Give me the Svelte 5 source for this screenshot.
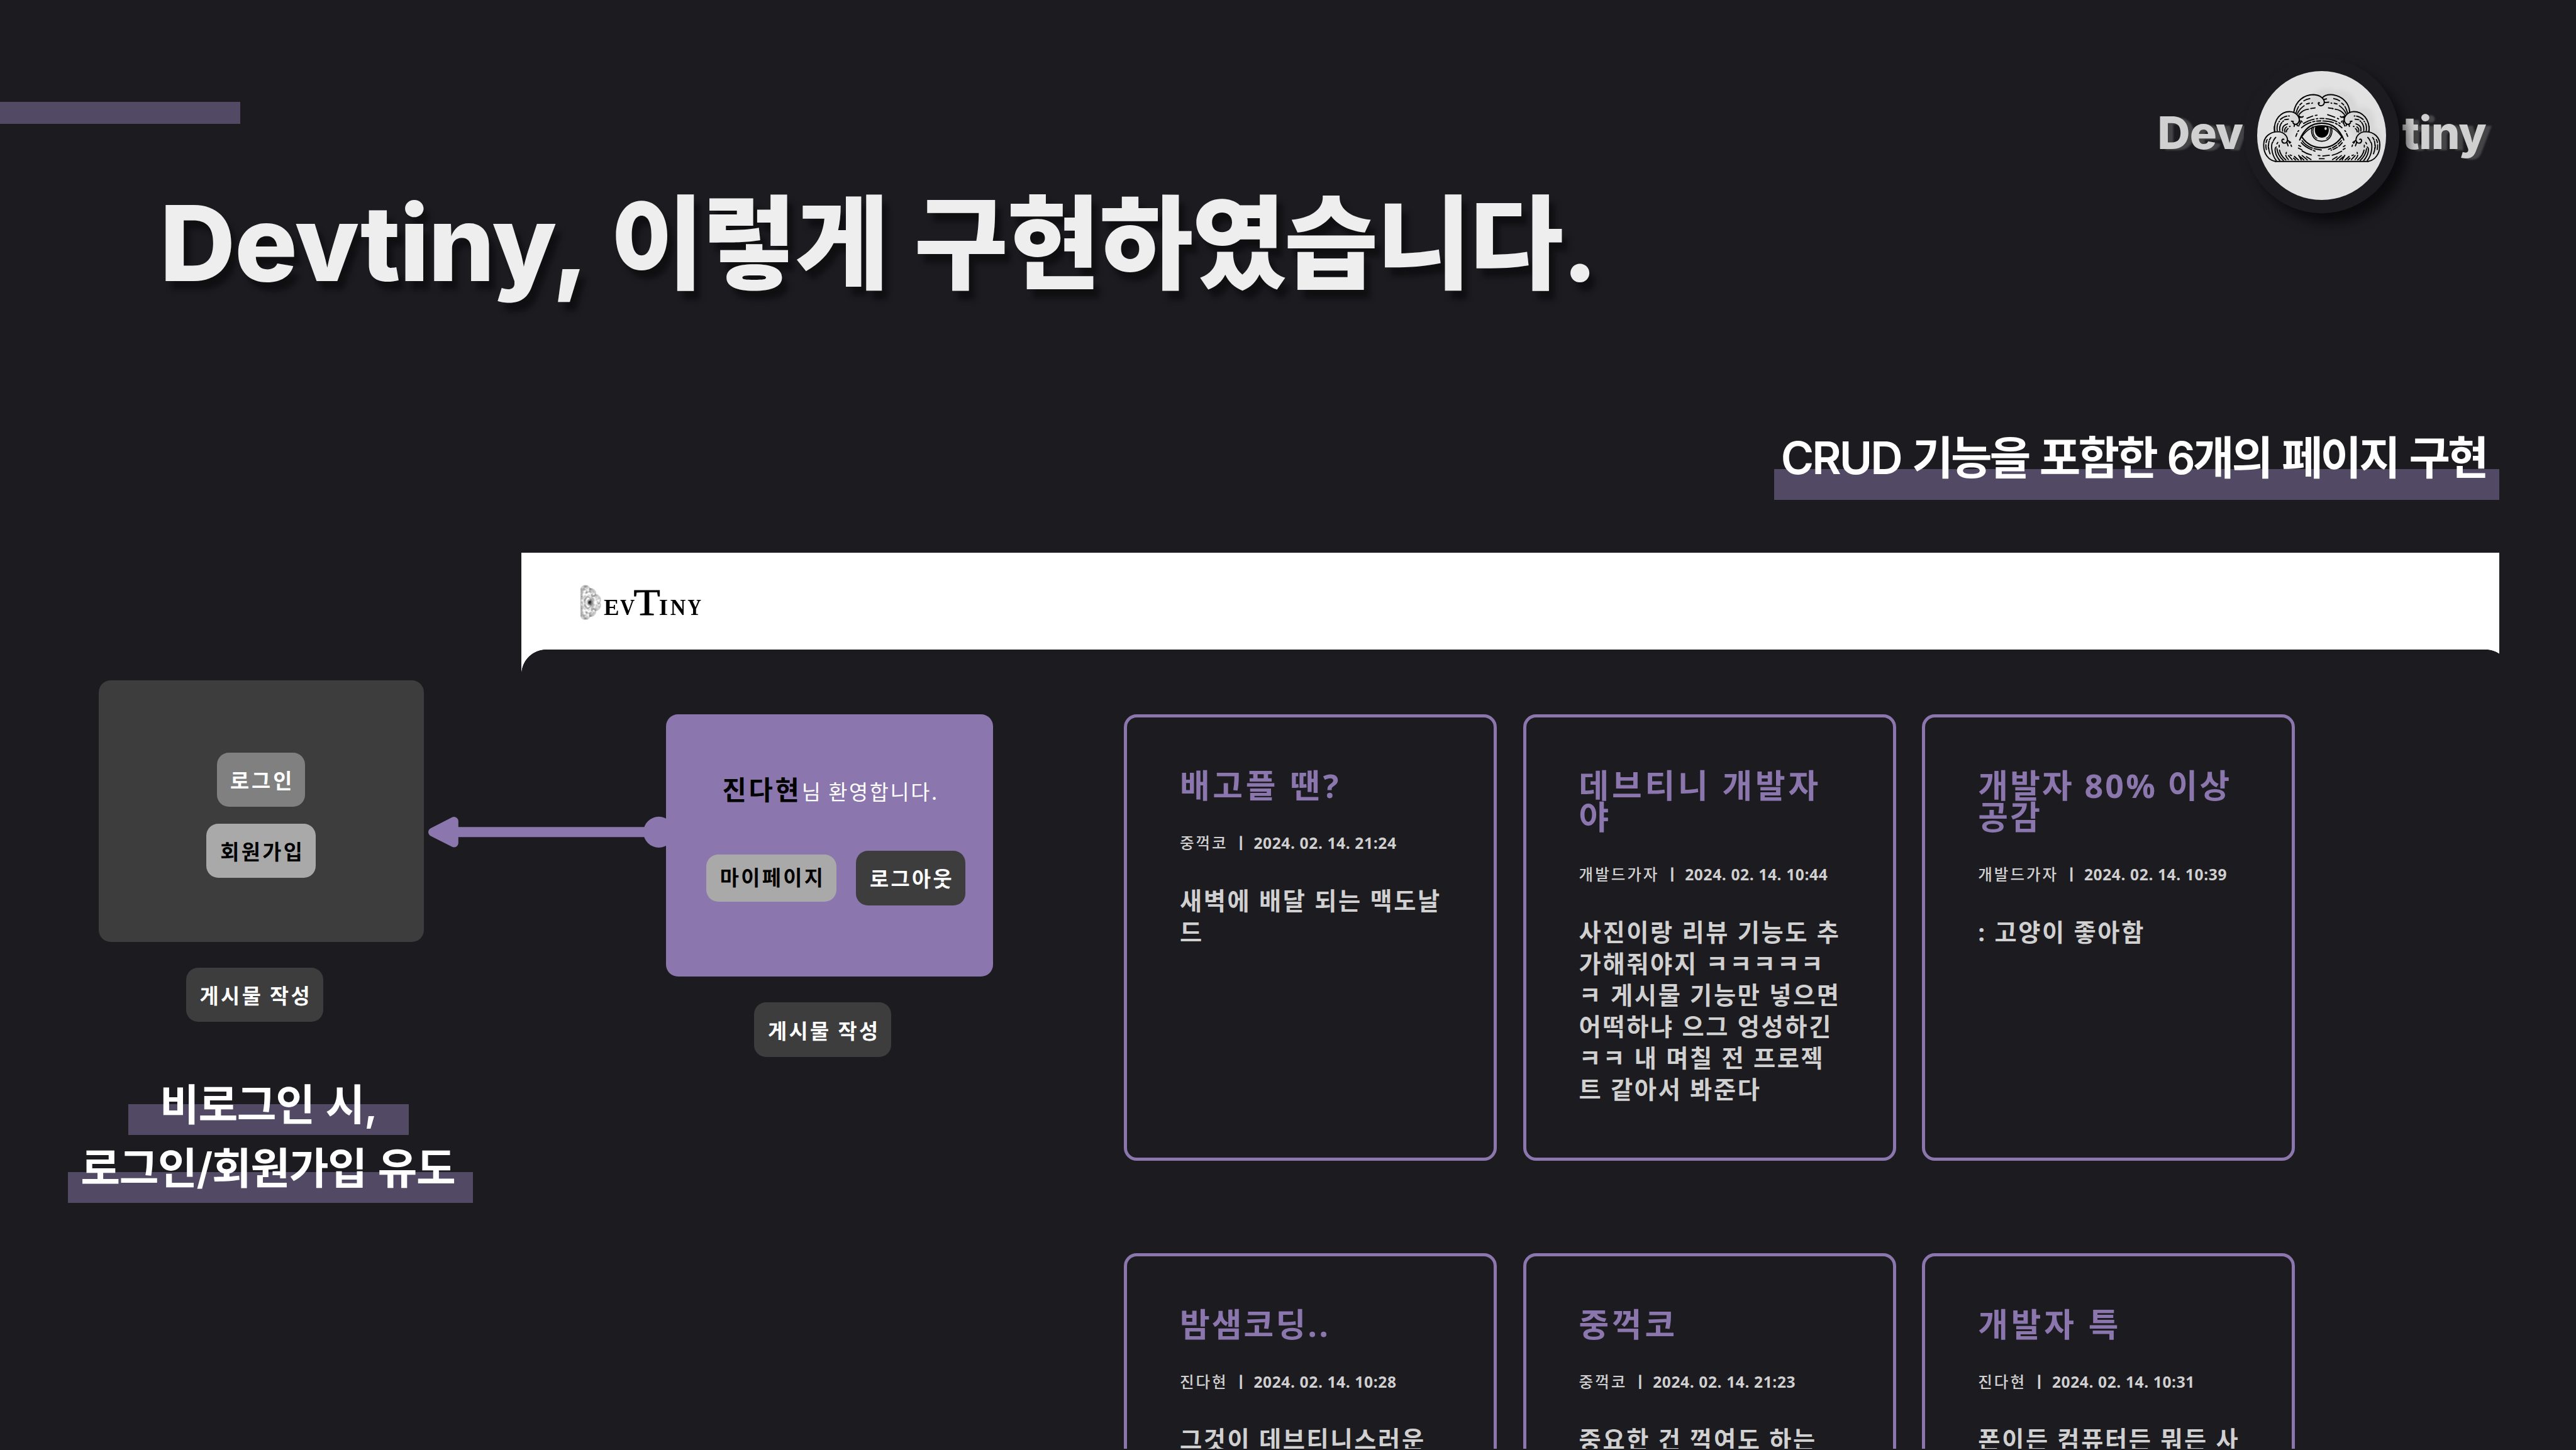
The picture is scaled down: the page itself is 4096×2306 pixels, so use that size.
<script>
  const posts = [
    { title: ['배고플 땐?'], author: '중꺽코', date: '2024. 02. 14. 21:24', body: ['새벽에 배달 되는 맥도날', '드'] },
    {
      title: ['데브티니 개발자', '야'],
      author: '개발드가자',
      date: '2024. 02. 14. 10:44',
      body: [
        '사진이랑 리뷰 기능도 추',
        '가해줘야지 ㅋㅋㅋㅋㅋ',
        'ㅋ 게시물 기능만 넣으면',
        '어떡하냐 으그 엉성하긴',
        'ㅋㅋ 내 며칠 전 프로젝',
        '트 같아서 봐준다'
      ]
    },
    { title: ['개발자 80% 이상', '공감'], tight: true, author: '개발드가자', date: '2024. 02. 14. 10:39', body: [': 고양이 좋아함'] },
    { title: ['밤샘코딩..'], tight: true, author: '진다현', date: '2024. 02. 14. 10:28', body: ['그것이 데브티니스러운'] },
    { title: ['중꺽코'], author: '중꺽코', date: '2024. 02. 14. 21:23', body: ['중요한 건 꺽여도 하는'] },
    { title: ['개발자 특'], author: '진다현', date: '2024. 02. 14. 10:31', body: ['폰이든 컴퓨터든 뭐든 사'] }
  ];
</script>

<!-- One half of the cloud; the other half is its mirror image -->
{#snippet half()}
  <g stroke-width="8.5">
    <path d="M150 645C98 636 68 588 68 535C64 476 110 438 166 437C206 438 234 466 234 497C232 522 200 524 195 502C194 491 202 487 208 491" />
    <path d="M143 437C136 350 190 297 248 297C296 298 319 334 316 360C310 388 283 394 272 374M262 364L274 366M283 388L280 400M300 386L303 396" />
    <path d="M143 400C141 415 142 425 145 437M316 352L325 376M234 497L256 512M228 508L238 536M313 326C324 337 336 338 343 331M316 340L330 334" />
  </g>
  <g stroke-width="8">
    <path d="M86 562C80 535 82 510 92 492" stroke-dasharray="34 14" />
    <path d="M112 592C96 555 98 500 118 478" stroke-dasharray="46 14 30 9" />
    <path d="M100 530C99 540 100 550 102 556" />
    <path d="M155 638C118 592 118 520 133 508M136 500C140 490 146 482 152 477" />
    <path d="M180 638C146 600 140 550 156 544M160 522L166 512" />
    <path d="M205 638C182 618 164 590 160 556M176 544L176 532" />
    <path d="M222 634C200 616 182 590 178 566M240 632C228 618 222 606 222 602M224 590L226 582" />
    <path d="M266 632L240 604M290 634L276 622M252 600L262 604" />
    <path d="M310 634C298 626 288 616 282 610M330 634L312 602M348 634L322 612M372 634L336 604M398 632L366 612" />
    <path d="M162 430C158 400 164 380 178 364M184 352C204 334 228 326 246 328" stroke-dasharray="52 12 20 12" />
    <path d="M180 430C176 400 188 376 206 362M214 354L240 350" stroke-dasharray="60 9" />
    <path d="M200 434C196 412 204 396 222 388M216 440C212 424 218 410 228 404M226 386L234 383M248 402L252 400M226 438C226 428 232 420 238 416" />
    <path d="M262 540L258 530M250 518L244 510M292 470L300 450M306 436L312 430" />
    <path d="M294 304C304 268 316 250 334 238M348 222C362 212 378 206 404 205" stroke-dasharray="46 14 34 16 10" />
    <path d="M304 310C314 286 330 270 350 256M366 244L386 239M403 239L408 237" />
    <path d="M314 318C334 292 360 282 380 280M396 276L426 271" />
    <path d="M322 376L312 398M330 362L336 370" />
  </g>
{/snippet}

{#snippet cloud()}
  <g fill="none" stroke="#000" stroke-linecap="round" stroke-linejoin="round">
    {@render half()}
    <g transform="translate(946 0) scale(-1 1)">{@render half()}</g>
    <g stroke-width="8.5">
      <path d="M278 300C290 222 350 180 415 179C466 181 492 210 491 234C486 262 449 264 449 238C450 234 454 234 457 237" />
      <path d="M478 200C495 182 525 177 552 180C622 192 664 240 668 300M490 212L506 208M494 234L522 231" />
      <path d="M150 645H796" stroke-width="9" />
      <path d="M319 495C352 412 410 378 473 378C536 378 594 412 627 495" stroke-width="9.5" />
      <path d="M336 470C375 415 420 395 473 395C526 395 571 415 610 470" stroke-width="7" />
      <path d="M334 474C372 528 418 549 473 549C528 549 574 528 612 474" stroke-width="9.5" />
      <path d="M408 404C394 436 404 502 473 504C542 502 552 436 538 404" stroke-width="7.5" />
      <path d="M418 402C406 432 412 470 440 484M528 402C540 432 534 470 506 484" stroke-width="6" />
    </g>
    <g stroke-width="8">
      <path d="M336 500C362 538 410 560 470 565M330 514C350 538 372 552 426 573" stroke-dasharray="90 12" />
      <path d="M610 500C584 532 556 548 520 560M616 514C596 540 572 556 538 566" stroke-dasharray="34 12" />
      <path d="M312 534L326 540M310 552L334 564M336 572C358 586 378 594 400 600M448 604L460 605M480 607L526 602M546 602C572 596 592 586 612 574M622 562L636 554M624 542L636 534M456 626L490 626" />
      <path d="M332 410C372 372 420 362 473 362C526 362 574 372 614 410" stroke-dasharray="76 14 14 12 30 14" />
      <path d="M346 380C382 356 424 345 473 345C522 345 564 356 600 380" stroke-dasharray="80 16 10 16 26 14" />
      <path d="M370 344L410 328M428 324L440 322M514 319L564 336M582 344L590 348M548 275L552 277" />
    </g>
    <path d="M430 397C414 440 436 479 473 479C512 479 532 440 518 397Z" fill="#000" stroke="none" />
    <ellipse cx="500" cy="416" rx="8" ry="10" fill="#d8d8d8" stroke="none" />
  </g>
{/snippet}

{#snippet post(p)}
  <article class="post">
    <h2 class:tight={p.tight}>{#each p.title as line}<span>{line}</span>{/each}</h2>
    <div class="meta"><span class="author">{p.author}</span><span class="sep">ㅣ</span><time>{p.date}</time></div>
    <p>{#each p.body as line}<span>{line}</span>{/each}</p>
  </article>
{/snippet}

<div class="slide">
  <header class="top">
    <div class="accent"></div>
    <div class="brand">
      <span class="word">Dev</span>
      <div class="emblem">
        <svg viewBox="22 14 902 902">
          <defs>
            <filter id="soft" x="-20%" y="-20%" width="140%" height="140%"><feGaussianBlur stdDeviation="17" /></filter>
          </defs>
          <path class="haze" d="M190 600C150 480 200 420 240 400C230 330 290 270 370 270C400 130 520 120 560 150C650 130 720 200 720 270C800 240 860 310 840 400C900 440 900 540 850 600Z" filter="url(#soft)" />
          <path class="clear" d="M250 590C200 500 300 420 330 330C380 220 560 210 610 330C660 420 760 500 690 590Z" filter="url(#soft)" />
          {@render cloud()}
        </svg>
      </div>
      <span class="word">tiny</span>
    </div>
  </header>

  <h1>Devtiny, <span class="hangul">이렇게 구현하였습니다.</span></h1>
  <p class="subtitle"><span class="latin">CRUD</span> 기능을 포함한 6개의 페이지 구현</p>

  <main>
    <aside>
      <section class="guest">
        <button class="login">로그인</button>
        <button class="join">회원가입</button>
      </section>
      <button class="write">게시물 작성</button>
      <div class="caption">
        <p class="first">비로그인 시,</p>
        <p class="second">로그인/회원가입 유도</p>
      </div>
    </aside>

    <section class="app">
      <div class="bar">
        <svg class="logo" viewBox="1340 1350 310 110">
          <g class="mini" transform="translate(1415.5 1356.9) rotate(90) scale(.0973)">{@render cloud()}</g>
          <g class="letters">
            <text x="1406" y="1432" textLength="36" lengthAdjust="spacingAndGlyphs">E</text>
            <text x="1444" y="1432" textLength="34" lengthAdjust="spacingAndGlyphs">V</text>
            <text class="tall" x="1475.5" y="1432" textLength="62" lengthAdjust="spacingAndGlyphs">T</text>
            <text x="1534.5" y="1432" textLength="21" lengthAdjust="spacingAndGlyphs">I</text>
            <text x="1561" y="1432" textLength="36" lengthAdjust="spacingAndGlyphs">N</text>
            <text x="1601" y="1432" textLength="32" lengthAdjust="spacingAndGlyphs">Y</text>
          </g>
        </svg>
      </div>
      <div class="content">
        <div class="side">
          <section class="member">
            <div class="hello"><strong>진다현</strong><span>님 환영합니다.</span></div>
            <div class="actions">
              <button class="mypage">마이페이지</button>
              <button class="logout">로그아웃</button>
            </div>
          </section>
          <button class="write">게시물 작성</button>
        </div>
        <div class="grid">
          {#each posts as p}{@render post(p)}{/each}
        </div>
      </div>
    </section>

    <svg class="arrow" viewBox="998 1900 580 78">
      <path d="M1060 1938.6H1535" stroke="#8b77ad" stroke-width="23.5" />
      <circle cx="1535" cy="1938.6" r="36" fill="#8b77ad" />
      <path d="M1008 1938.6L1058 1913V1964Z" fill="#8b77ad" stroke="#8b77ad" stroke-width="20" stroke-linejoin="round" />
    </svg>
  </main>
</div>

<style>
  /* 1rem is a hundred units of the 6000 x 3378 slide */
  :global(html) {
    font-size: 68.2667px;
  }
  :global(body) {
    margin: 0;
    background: #1c1b20;
    overflow: hidden;
  }
  * {
    box-sizing: border-box;
  }
  h1, h2, p {
    margin: 0;
  }
  .slide {
    width: 60rem;
    height: 33.78rem;
    overflow: hidden;
    background: #1c1b20;
    display: flex;
    flex-direction: column;
    font-family: Inter, 'Noto Sans CJK KR', sans-serif;
    white-space: nowrap;
  }
  .top {
    height: 4.17rem;
    flex: none;
    display: flex;
    justify-content: space-between;
    align-items: flex-start;
  }
  .accent {
    width: 5.59rem;
    height: 0.52rem;
    margin-top: 2.37rem;
    background: #524965;
  }
  .brand {
    display: grid;
    grid-template-columns: 2.32rem 3.01rem 2.1rem;
    padding: 1.65rem 2.32rem 0 0;
  }
  .word {
    margin-top: 0.843rem;
    font-size: 1.055rem;
    line-height: 1.2rem;
    font-weight: 800;
    letter-spacing: -0.012rem;
    color: #d0d0d0;
    text-shadow: 0.13rem 0.035rem 0.04rem #454547;
  }
  .word:last-child {
    padding-left: 0.37rem;
  }
  .emblem {
    position: relative;
    z-index: 1;
    width: 3.01rem;
    height: 3.01rem;
    border-radius: 50%;
    background: #e2e2e2;
    box-shadow: 0 0 0 0.31rem #1c1b20, 0.2rem 0.22rem 0.28rem 0.31rem rgba(0, 0, 0, 0.62);
  }
  .emblem svg {
    display: block;
    width: 100%;
    height: 100%;
  }
  .haze {
    fill: #d7d7d7;
  }
  .clear {
    fill: #e2e2e2;
  }
  h1 {
    height: 3rem;
    padding-left: 3.72rem;
    font-size: 2.44rem;
    line-height: 3rem;
    font-weight: 800;
    letter-spacing: -0.02rem;
    word-spacing: 0.1rem;
    color: #eee;
    text-shadow: 0.14rem 0.2rem 0.12rem rgba(0, 0, 0, 0.45);
  }
  .hangul {
    font-size: 2.38rem;
    line-height: 1rem;
    letter-spacing: -0.034rem;
    word-spacing: 0.13rem;
  }
  .subtitle {
    align-self: flex-end;
    width: 16.891rem;
    height: 1.57rem;
    margin: 2.91rem 1.785rem 0 0;
    padding-left: 0.156rem;
    font-size: 1.044rem;
    line-height: 1.2rem;
    font-weight: 600;
    letter-spacing: -0.057rem;
    word-spacing: 0.05rem;
    color: #fff;
    background: linear-gradient(#524965, #524965) 0 100% / 100% 0.72rem no-repeat;
  }
  .latin {
    letter-spacing: -0.043rem;
  }
  main {
    position: relative;
    flex: none;
    height: 20.875rem;
    margin-top: 1.23rem;
    overflow: hidden;
    display: flex;
    align-items: flex-start;
  }
  aside {
    flex: none;
    width: 12.14rem;
    padding-top: 2.976rem;
  }
  button {
    display: flex;
    justify-content: center;
    align-items: center;
    flex: none;
    padding: 0 0 0 0.06rem;
    border: 0;
    border-radius: 0.28rem;
    background: #3d3d3d;
    color: #fff;
    font: 700 0.48rem/0.7rem 'Noto Sans CJK KR', sans-serif;
    letter-spacing: 0.05rem;
  }
  .guest {
    width: 7.57rem;
    height: 6.084rem;
    margin-left: 2.297rem;
    padding-top: 1.685rem;
    border-radius: 0.28rem;
    background: #3d3d3d;
    display: flex;
    flex-direction: column;
    align-items: center;
    gap: 0.4rem;
  }
  .login {
    width: 2.06rem;
    height: 1.255rem;
    background: #808080;
    letter-spacing: 0.06rem;
  }
  .join {
    width: 2.55rem;
    height: 1.26rem;
    background: #a9a9a9;
    color: #000;
  }
  .write {
    width: 3.19rem;
    height: 1.265rem;
    margin-top: 0.606rem;
  }
  aside .write {
    margin-left: 4.335rem;
  }
  .caption {
    width: 12.5rem;
    margin-top: 1.2rem;
    display: flex;
    flex-direction: column;
    align-items: center;
    font-size: 1rem;
    line-height: 1.48rem;
    font-weight: 600;
    letter-spacing: -0.02rem;
    word-spacing: 0.03rem;
    color: #fff;
    text-align: center;
  }
  .first {
    width: 6.53rem;
    background: linear-gradient(#524965, #524965) 0 0.714rem / 100% 0.72rem no-repeat;
  }
  .second {
    width: 9.432rem;
    height: 1.54rem;
    margin-left: 0.086rem;
    padding-right: 0.11rem;
    background: linear-gradient(#524965, #524965) 0 100% / 100% 0.721rem no-repeat;
  }
  .app {
    flex: none;
    width: 46.075rem;
  }
  .bar {
    height: 2.25rem;
    padding: 0.62rem 0 0 1.26rem;
    background: #fff;
  }
  .logo {
    display: block;
    width: 3.1rem;
    height: 1.1rem;
  }
  .mini {
    opacity: 0.85;
  }
  .letters {
    font: 700 53px 'Liberation Serif', serif;
  }
  .tall {
    font-size: 87px;
    font-weight: 400;
    stroke: #000;
    stroke-width: 1.2px;
  }
  .content {
    display: flex;
    align-items: flex-start;
    padding-top: 1.512rem;
    background:
      radial-gradient(circle at 100% 100%, transparent 0.575rem, #fff 0.585rem) 0 0 / 0.58rem 0.58rem no-repeat,
      radial-gradient(circle at 0 100%, transparent 0.575rem, #fff 0.585rem) 100% 0 / 0.325rem 0.58rem no-repeat;
  }
  .side {
    flex: none;
    width: 7.616rem;
    margin: 0 3.046rem 0 3.374rem;
  }
  .side .write {
    margin-left: 2.054rem;
  }
  .member {
    height: 6.108rem;
    padding-top: 1.333rem;
    border-radius: 0.28rem;
    background: #8b77ad;
  }
  .hello {
    display: flex;
    align-items: baseline;
    padding-left: 1.31rem;
    height: 0.8rem;
    font: 0.48rem/0.8rem 'Noto Sans CJK KR', sans-serif;
    color: #fff;
  }
  .hello strong {
    font-size: 0.61rem;
    font-weight: 700;
    letter-spacing: 0.055rem;
    color: #000;
  }
  .hello span {
    font-weight: 400;
    letter-spacing: 0.038rem;
  }
  .actions {
    display: flex;
    align-items: center;
    gap: 0.446rem;
    margin: 1.045rem 0 0 0.93rem;
  }
  .mypage {
    width: 3.045rem;
    height: 1.09rem;
    background: #a9a9a9;
    color: #000;
    padding-bottom: 0.08rem;
  }
  .logout {
    width: 2.554rem;
    height: 1.27rem;
  }
  .grid {
    display: grid;
    grid-template-columns: repeat(3, 8.686rem);
    grid-auto-rows: 10.4rem;
    gap: 2.15rem 0.612rem;
    font-family: 'Open Sans', 'Noto Sans CJK KR', sans-serif;
  }
  .post {
    padding: 1.235rem 0 0 1.23rem;
    border: 0.075rem solid #8b77ad;
    border-radius: 0.3rem;
    color: #d0d0d0;
  }
  .post h2 span,
  .post p span {
    display: block;
  }
  .post h2 {
    font-size: 0.76rem;
    line-height: 0.73rem;
    font-weight: 700;
    letter-spacing: 0.069rem;
    color: #8b77ad;
  }
  .post .tight {
    letter-spacing: 0.046rem;
  }
  .meta {
    display: flex;
    margin: 0.765rem 0 0.765rem;
    font-size: 0.36rem;
    line-height: 0.4rem;
  }
  .author {
    font-weight: 500;
    letter-spacing: 0.043rem;
  }
  .sep {
    width: 0.6rem;
    text-align: center;
    font-weight: 700;
  }
  time {
    font-weight: 700;
    letter-spacing: 0.0088rem;
  }
  .post p {
    font-size: 0.56rem;
    line-height: 0.733rem;
    font-weight: 700;
    letter-spacing: 0.039rem;
  }
  .arrow {
    position: absolute;
    left: 9.98rem;
    top: 6.12rem;
    width: 5.8rem;
    height: 0.78rem;
  }
</style>
